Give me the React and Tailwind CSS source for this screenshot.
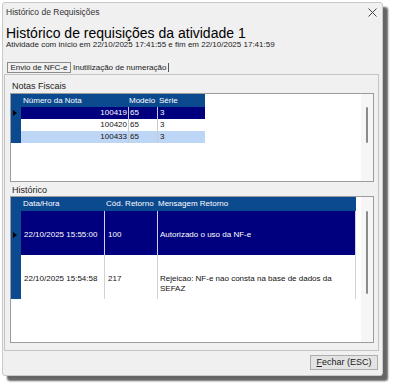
const notas = [
  { numero: '100419', modelo: '65', serie: '3', tone: 'sel' },
  { numero: '100420', modelo: '65', serie: '3', tone: 'plain' },
  { numero: '100433', modelo: '65', serie: '3', tone: 'alt' },
];

const historico = [
  { data: '22/10/2025 15:55:00', cod: '100', msg: ['Autorizado o uso da NF-e'], sel: true },
  { data: '22/10/2025 15:54:58', cod: '217', msg: ['Rejeicao: NF-e nao consta na base de dados da', 'SEFAZ'], sel: false },
];

// Indicador da linha atual (seta preta)
const RowArrow = () => (
  <svg width="4" height="6" viewBox="0 0 4 6" className="block">
    <polygon points="0,0 4,3 0,6" fill="#000" />
  </svg>
);

const ScrollTrack = ({ top, length }) => (
  <div className="w-[12px] bg-[#f6f6f6] flex justify-center">
    <div className="w-[2px] rounded-full bg-[#8a8a8a]" style={{ marginTop: top, height: length }} />
  </div>
);

const NotasGrid = () => (
  <div className="ml-[5px] mt-[1px] w-[364px] h-[89px] border border-[#9c9c9c] bg-white flex">
    <div className="flex-1 flex flex-col">
      <div className="flex h-[13px] text-white text-[8px] leading-[13px]">
        <div className="w-[10px] bg-[#0c4a8f]" />
        <div className="w-[107px] bg-[#0c4a8f] pl-[2px]">Número da Nota</div>
        <div className="w-[29px] bg-[#0c4a8f] pl-[1px]">Modelo</div>
        <div className="w-[48px] bg-[#0c4a8f] pl-[2px]">Série</div>
      </div>
      {notas.map((n, i) => {
        const bg = n.tone === 'sel' ? 'bg-[#00007e] text-white' : n.tone === 'alt' ? 'bg-[#bdd6f6] text-[#111]' : 'bg-white text-[#111]';
        const line = n.tone === 'sel' ? 'border-[#c8c8e8]' : 'border-[#c9c9c9]';
        return (
          <div key={n.numero} className="flex h-[12px] text-[8px] leading-[12px]">
            <div className="w-[10px] bg-[#0c4a8f] flex items-center pl-[2px]">{i === 0 && <RowArrow />}</div>
            <div className={`w-[107px] text-right pr-[1px] ${bg}`}>{n.numero}</div>
            <div className={`w-[29px] border-l pl-[1px] ${bg} ${line}`}>{n.modelo}</div>
            <div className={`w-[48px] border-l pl-[2px] ${bg} ${line}`}>{n.serie}</div>
          </div>
        );
      })}
    </div>
    <ScrollTrack top={13} length={36} />
  </div>
);

const HistoricoGrid = () => (
  <div className="ml-[5px] w-[364px] h-[147px] border border-[#9c9c9c] bg-white flex">
    <div className="w-[345px] flex flex-col">
      <div className="flex h-[14px] text-white text-[8px] leading-[14px] bg-[#0c4a8f]">
        <div className="w-[10px]" />
        <div className="w-[83px] pl-[2px]">Data/Hora</div>
        <div className="w-[53px] pl-[2px]">Cód. Retorno</div>
        <div className="w-[199px] pl-[1px]">Mensagem Retorno</div>
      </div>
      {historico.map((h) => {
        const bg = h.sel ? 'bg-[#00007e] text-white' : 'bg-white text-[#111]';
        const line = h.sel ? 'border-[#d0d0ee]' : 'border-[#d2d2d2]';
        return (
          <div key={h.data} className="flex h-[44px] text-[8px] leading-[10px]">
            <div className="w-[10px] bg-[#0c4a8f] pl-[2px] pt-[21px]">{h.sel && <RowArrow />}</div>
            <div className={`w-[83px] pl-[3px] pt-[19px] ${bg}`}>{h.data}</div>
            <div className={`w-[53px] border-l pl-[3px] pt-[19px] ${bg} ${line}`}>{h.cod}</div>
            <div className={`w-[199px] border-l border-r pl-[2px] pt-[19px] ${bg} ${line}`}>
              {h.msg.map((m) => (
                <div key={m}>{m}</div>
              ))}
            </div>
          </div>
        );
      })}
    </div>
    <div className="flex-1" />
    <ScrollTrack top={14} length={83} />
  </div>
);

export default function App() {
  return (
    <div className="w-[395px] h-[387px] bg-white p-[2px] font-['Liberation_Sans',Arial,sans-serif] text-[#1a1a1a]">
      <div className="w-[381px] h-[374px] bg-[#f0f0f0] border border-[#c9c9c9] rounded-[3px] shadow-[5px_5px_2px_rgba(50,50,50,0.75)] flex flex-col">
        {/* Barra de título */}
        <div className="h-[19px] flex items-center justify-between pl-[3px] pr-[5px]">
          <span className="text-[8.5px] text-[#333]">Histórico de Requisições</span>
          <svg width="9" height="9" viewBox="0 0 9 9">
            <path d="M0.5 0.5L8.5 8.5M8.5 0.5L0.5 8.5" stroke="#444" strokeWidth="1" />
          </svg>
        </div>

        <div className="mt-[5px] pl-[3px] h-[13px] leading-[13px] text-[14px] text-black">
          Histórico de requisições da atividade 1
        </div>
        <div className="pl-[3px] h-[9px] leading-[9px] text-[8px] text-[#222]">
          Atividade com início em 22/10/2025 17:41:55 e fim em 22/10/2025 17:41:59
        </div>

        {/* Abas */}
        <div className="mt-[12px] h-[13px] flex pl-[4px] text-[8px]">
          <div className="w-[64px] my-[1px] border border-[#8a8a8a] flex items-center justify-center">Envio de NFC-e</div>
          <div className="flex items-center pl-[2px] pr-[2px] my-[2px] border-r border-[#555]">Inutilização de numeração</div>
        </div>

        {/* Painel da aba */}
        <div className="ml-[1px] w-[375px] h-[277px] border border-[#c4c4c4] flex flex-col">
          <div className="mt-[6px] pl-[7px] h-[11px] leading-[11px] text-[9px] text-[#222]">Notas Fiscais</div>
          <NotasGrid />
          <div className="mt-[3px] pl-[7px] h-[11px] leading-[11px] text-[9px] text-[#222]">Histórico</div>
          <HistoricoGrid />
        </div>

        <div className="mt-[4px] pr-[4px] flex justify-end">
          <button className="h-[15px] w-[68px] border border-[#adadad] bg-[#e3e3e3] text-[9px] leading-none text-[#222]">
            <span className="underline">F</span>echar (ESC)
          </button>
        </div>
      </div>
    </div>
  );
}
